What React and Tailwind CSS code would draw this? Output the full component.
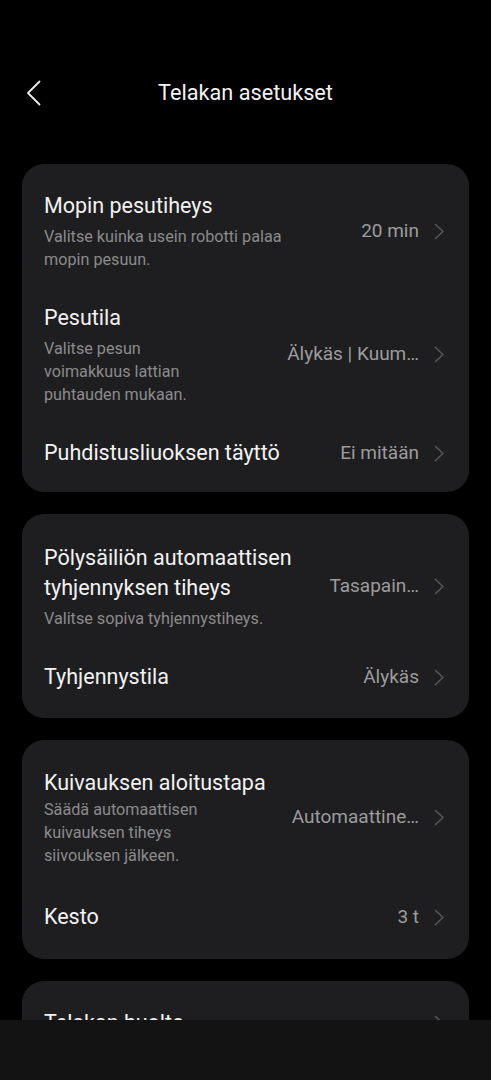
const cards = [
  {
    pad: 'pt-[11px] pb-[8px]',
    rows: [
      { title: 'Mopin pesutiheys', sub: 'Valitse kuinka usein robotti palaa mopin pesuun.', subW: 'w-[250px]', value: '20 min' },
      { title: 'Pesutila', sub: 'Valitse pesun voimakkuus lattian puhtauden mukaan.', subW: 'w-[170px]', value: 'Älykäs | Kuum…' },
      { title: 'Puhdistusliuoksen täyttö', value: 'Ei mitään' },
    ],
  },
  {
    pad: 'pt-[13px] pb-[10px]',
    rows: [
      { title: 'Pölysäiliön automaattisen tyhjennyksen tiheys', titleW: 'w-[265px]', sub: 'Valitse sopiva tyhjennystiheys.', subW: 'w-[250px]', value: 'Tasapain…' },
      { title: 'Tyhjennystila', value: 'Älykäs' },
    ],
  },
  {
    pad: 'pt-[12px] pb-[11px]',
    rows: [
      { title: 'Kuivauksen aloitustapa', sub: 'Säädä automaattisen kuivauksen tiheys siivouksen jälkeen.', subW: 'w-[180px]', subGap: 'mt-0', value: 'Automaattine…' },
      { title: 'Kesto', value: '3 t', extra: 'mt-[3px]' },
    ],
  },
  { pad: 'pt-[11px] pb-[8px]', rows: [{ title: 'Telakan huolto', value: '' }] },
];

const Chevron = () => (
  <svg width="11" height="17" viewBox="0 0 11 17" fill="none" className="ml-[15px] shrink-0">
    <polyline points="1.5,1.5 9,8.5 1.5,15.5" stroke="#5a5a5c" strokeWidth="1.4" strokeLinecap="round" strokeLinejoin="round" />
  </svg>
);

const Row = ({ item }) => (
  <div className={`flex items-center py-[16px] ${item.extra || ''}`}>
    <div className="flex-1 min-w-0">
      <div className={`text-[21.5px] leading-[30px] text-[#f2f2f2] ${item.titleW || ''}`}>{item.title}</div>
      {item.sub && (
        <div className={`${item.subGap || 'mt-[4px]'} text-[16.2px] leading-[23px] text-[#8b8b8b] ${item.subW}`}>{item.sub}</div>
      )}
    </div>
    <div className="flex items-center shrink-0">
      {item.value && <span className="text-[19px] text-[#9c9c9c] whitespace-nowrap">{item.value}</span>}
      <Chevron />
    </div>
  </div>
);

export default function App() {
  return (
    <div
      className="relative h-[1080px] overflow-hidden bg-black"
      style={{ fontFamily: 'Roboto, "Noto Sans", sans-serif' }}
    >
      {/* Header */}
      <div className="h-[164px] pt-[78px]">
        <div className="relative flex h-[30px] items-center justify-center">
          <svg width="16" height="26" viewBox="0 0 16 26" fill="none" className="absolute left-[26px] top-[2px]">
            <polyline points="13.5,1.5 2,13 13.5,24.5" stroke="#ececec" strokeWidth="1.8" strokeLinecap="round" strokeLinejoin="round" />
          </svg>
          <h1 className="text-[21.7px] leading-[30px] text-[#f2f2f2]">Telakan asetukset</h1>
        </div>
      </div>

      <div className="flex flex-col gap-[22px] px-[22px]">
        {cards.map((card, i) => (
          <div key={i} className={`rounded-[22px] bg-[#1e1e20] pl-[22px] pr-[24px] ${card.pad}`}>
            {card.rows.map((r) => (
              <Row key={r.title} item={r} />
            ))}
          </div>
        ))}
      </div>

      {/* Bottom nav bar overlay */}
      <div className="absolute bottom-0 left-0 right-0 h-[60px] bg-[#131313]" />
    </div>
  );
}
